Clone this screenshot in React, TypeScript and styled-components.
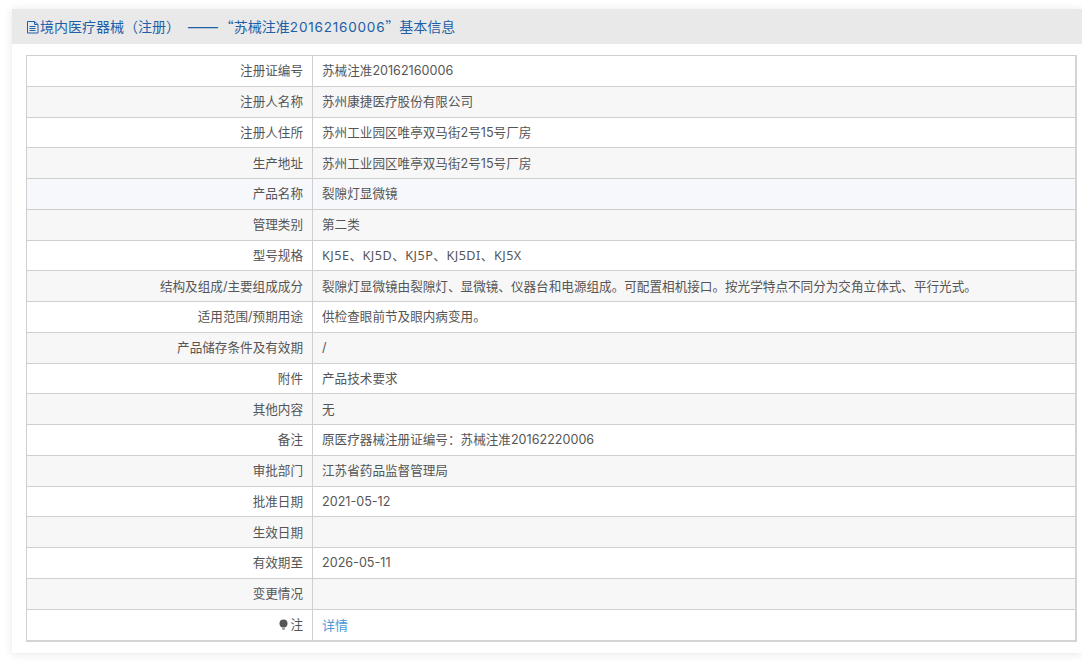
import React from "react";
import styled, { createGlobalStyle } from "styled-components";

const GlobalStyle = createGlobalStyle`
  html, body {
    margin: 0;
    padding: 0;
    background: #fff;
    overflow: hidden;
  }
  body {
    font-family: Inter, "Noto Sans CJK SC", sans-serif;
  }
`;

const Page = styled.div`
  height: 664px;
  padding: 9px 0 0 12px;
  box-sizing: border-box;
`;

const Panel = styled.section`
  width: 1070px;
  height: 644px;
  background: #fff;
  box-shadow: 0 1px 9px rgba(0, 0, 0, 0.1);
`;

const PanelHeader = styled.h2`
  margin: 0;
  height: 35px;
  padding-left: 14px;
  box-sizing: border-box;
  display: flex;
  align-items: center;
  background: #e9e9e9;
  color: #1e5fa8;
  font-family: "Noto Sans CJK SC", sans-serif;
  font-size: 14px;
  font-weight: 400;
  line-height: 20px;
  white-space: pre;
`;

const Digits = styled.span`
  font-family: Inter, sans-serif;
  font-size: 13.6px;
  letter-spacing: 0.75px;
`;

const Dashes = styled.span`
  margin: 0 1px 0 7px;
  font-size: 19px;
  line-height: 14px;
  vertical-align: -1px;
`;

const FileIcon = styled.svg`
  width: 14px;
  height: 14px;
  flex: none;
  fill: none;
  stroke: #1e5fa8;
  stroke-width: 1;
`;

const PanelBody = styled.div`
  padding: 11px 0 0 14px;
`;

const InfoTable = styled.table`
  width: 1051px;
  border-collapse: collapse;
  table-layout: fixed;
  border-right: 2px solid #d4d4d4;
  border-bottom: 2px solid #d4d4d4;
  font-size: 12.6px;
  line-height: 18px;
  color: #555;
`;

const Row = styled.tr<{ $tone: "plain" | "stripe" | "hover" }>`
  height: 30.75px;
  background: ${(p) =>
    p.$tone === "stripe" ? "#f7f7f7" : p.$tone === "hover" ? "#f6f8fb" : "#fff"};
`;

const LastRow = styled(Row)`
  height: 32px;
`;

const LabelCell = styled.th`
  width: 286px;
  box-sizing: border-box;
  padding: 1px 9px 0 0;
  border: 1px solid #cfcfcf;
  text-align: right;
  font-weight: 400;
`;

const ValueCell = styled.td`
  padding: 1px 0 0 9px;
  border: 1px solid #cfcfcf;
  white-space: nowrap;
`;

const ModelText = styled.span`
  font-family: "Noto Sans", "Noto Sans CJK SC", sans-serif;
  letter-spacing: 0.5px;
`;

const DetailLink = styled.a`
  color: #4a98d8;
  font-size: 13px;
  text-decoration: none;
`;

const BulbIcon = styled.svg`
  width: 11px;
  height: 12px;
  margin-right: 1px;
  vertical-align: -2px;
`;

const rows: [string, React.ReactNode][] = [
  ["注册证编号", "苏械注准20162160006"],
  ["注册人名称", "苏州康捷医疗股份有限公司"],
  ["注册人住所", "苏州工业园区唯亭双马街2号15号厂房"],
  ["生产地址", "苏州工业园区唯亭双马街2号15号厂房"],
  ["产品名称", "裂隙灯显微镜"],
  ["管理类别", "第二类"],
  ["型号规格", <ModelText>KJ5E、KJ5D、KJ5P、KJ5DI、KJ5X</ModelText>],
  ["结构及组成/主要组成成分", "裂隙灯显微镜由裂隙灯、显微镜、仪器台和电源组成。可配置相机接口。按光学特点不同分为交角立体式、平行光式。"],
  ["适用范围/预期用途", "供检查眼前节及眼内病变用。"],
  ["产品储存条件及有效期", "/"],
  ["附件", "产品技术要求"],
  ["其他内容", "无"],
  ["备注", "原医疗器械注册证编号：苏械注准20162220006"],
  ["审批部门", "江苏省药品监督管理局"],
  ["批准日期", "2021-05-12"],
  ["生效日期", ""],
  ["有效期至", "2026-05-11"],
  ["变更情况", ""],
];

const toneOf = (i: number) => (i === 4 ? "hover" : i % 2 === 1 ? "stripe" : "plain");

export default function App() {
  return (
    <Page>
      <GlobalStyle />
      <Panel>
        <PanelHeader>
          <FileIcon viewBox="0 0 14 14">
            <path d="M1.5 1.5h7l3.5 3v8.5H1.5z" />
            <path d="M8.5 1.5v3H12M3.5 6.5h6M3.5 8.5h6M3.5 10.5h6" />
          </FileIcon>
          <span>
            境内医疗器械（注册）
            <Dashes>——</Dashes>
            “苏械注准<Digits>20162160006</Digits>”基本信息
          </span>
        </PanelHeader>
        <PanelBody>
          <InfoTable>
            <tbody>
              {rows.map(([label, value], i) => (
                <Row key={label} $tone={toneOf(i)}>
                  <LabelCell>{label}</LabelCell>
                  <ValueCell>{value}</ValueCell>
                </Row>
              ))}
              <LastRow $tone="plain">
                <LabelCell>
                  <BulbIcon viewBox="0 0 11 12">
                    <circle cx="5.5" cy="4.6" r="4" fill="#555" />
                    <path d="M3.8 8.5h3.4L6.4 11H4.6z" fill="#999" />
                  </BulbIcon>
                  注
                </LabelCell>
                <ValueCell>
                  <DetailLink href="#">详情</DetailLink>
                </ValueCell>
              </LastRow>
            </tbody>
          </InfoTable>
        </PanelBody>
      </Panel>
    </Page>
  );
}
